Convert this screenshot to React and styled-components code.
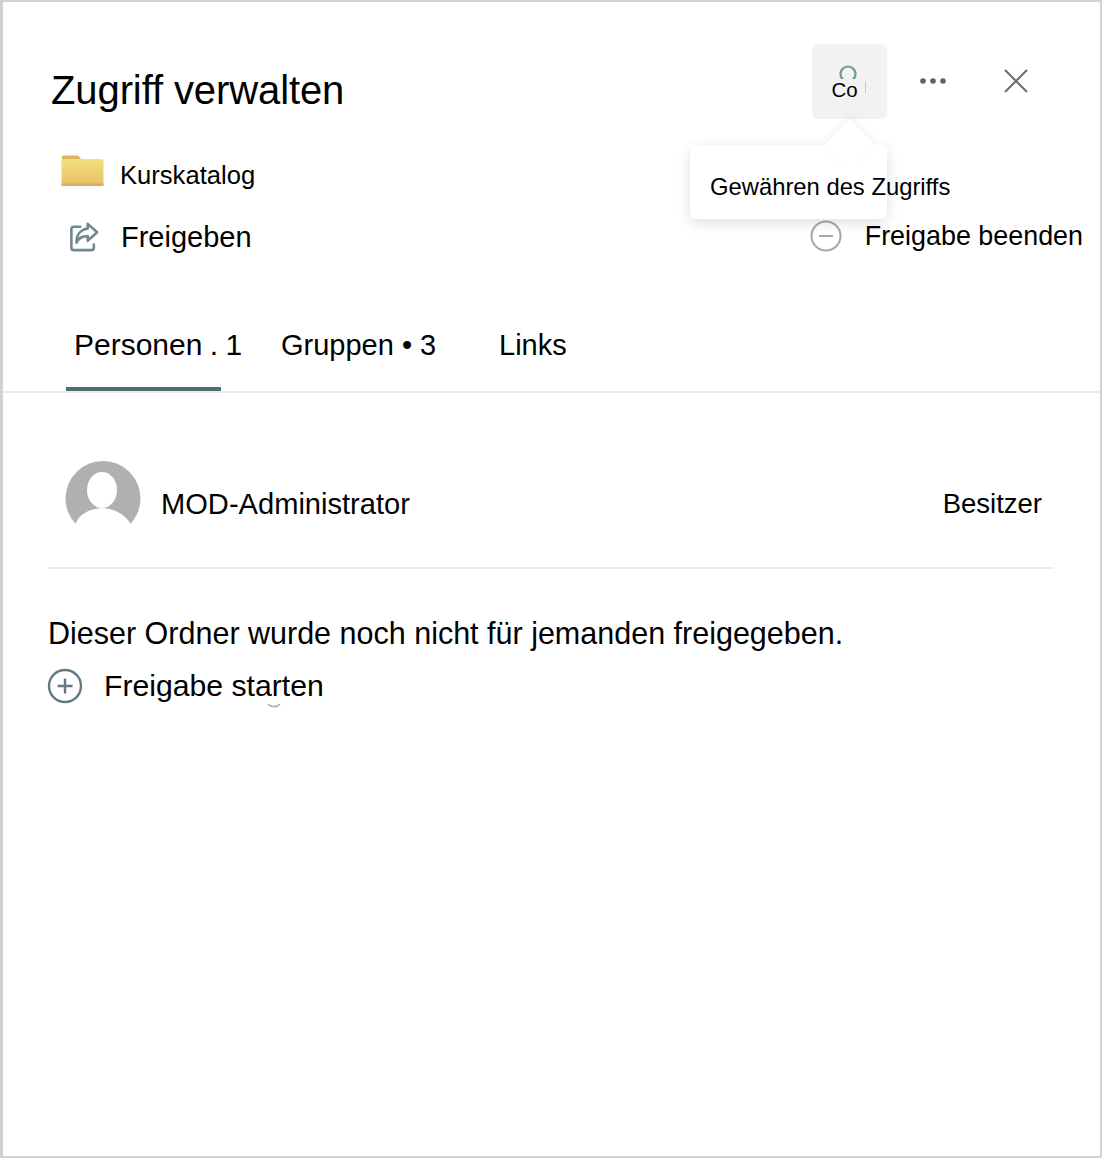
import React from 'react';
import styled, { createGlobalStyle } from 'styled-components';

const GlobalStyle = createGlobalStyle`
  html, body {
    margin: 0;
    padding: 0;
    background: #fff;
  }
  body {
    font-family: 'Liberation Sans', Arial, sans-serif;
    color: #000;
  }
`;

const Panel = styled.div`
  box-sizing: border-box;
  width: 1102px;
  height: 1158px;
  border: 2px solid #d2d2d2;
  border-left-width: 3px;
  background: #fff;
  overflow: hidden;
`;

const Header = styled.header`
  display: flex;
  justify-content: space-between;
  align-items: flex-start;
  padding: 42px 47px 0 48px;
  height: 75px;
`;

const Title = styled.h1`
  margin: 24px 0 0;
  font-size: 40px;
  line-height: 44px;
  font-weight: 400;
  letter-spacing: -0.1px;
`;

const Actions = styled.div`
  position: relative;
  display: flex;
  align-items: flex-start;
  gap: 29px;
`;

const ManageButton = styled.button`
  position: relative;
  box-sizing: border-box;
  display: flex;
  flex-direction: column;
  align-items: center;
  width: 75px;
  height: 75px;
  padding: 21px 0 0;
  border: 0;
  border-radius: 6px;
  background: #f3f2f1;
  font: inherit;
  color: #000;

  &::after {
    content: '';
    position: absolute;
    left: 53px;
    top: 37px;
    width: 1px;
    height: 12px;
    background: #b9cccd;
  }
`;

const ManageLabel = styled.span`
  margin: 1px 10px 0 0;
  font-size: 20.5px;
  line-height: 20px;
`;

const IconButton = styled.button`
  display: flex;
  align-items: center;
  justify-content: center;
  width: ${p => p.$size}px;
  height: 73px;
  padding: 0;
  border: 0;
  background: none;
`;

const Tooltip = styled.div`
  position: absolute;
  z-index: 2;
  top: 101px;
  left: -122px;
  box-sizing: border-box;
  width: 197px;
  height: 74px;
  padding: 29px 20px 0;
  background: #fff;
  border-radius: 6px;
  box-shadow: 0 4px 14px rgba(0, 0, 0, 0.13);
  font-size: 23.8px;
  line-height: 26px;
  white-space: nowrap;

  &::before {
    content: '';
    position: absolute;
    top: -18px;
    right: 19px;
    width: 36px;
    height: 36px;
    background: #fff;
    transform: rotate(45deg);
    box-shadow: -3px -3px 8px rgba(0, 0, 0, 0.05);
    z-index: -1;
  }
`;

const FolderRow = styled.div`
  display: flex;
  align-items: center;
  gap: 15px;
  margin-top: 35px;
  padding-left: 58px;
  height: 34px;
  font-size: 25.6px;
`;

const FolderName = styled.span`
  margin-top: 8px;
`;

const ShareRow = styled.div`
  display: flex;
  justify-content: space-between;
  align-items: center;
  height: 40px;
  margin-top: 29px;
  padding: 0 17px 0 66px;
`;

const ShareAction = styled.div`
  display: flex;
  align-items: center;
  gap: ${p => p.$gap}px;
  margin-bottom: ${p => p.$lift || 0}px;
  font-size: ${p => p.$font}px;
`;

const Tabs = styled.nav`
  display: flex;
  box-sizing: border-box;
  height: 97px;
  margin-top: 39px;
  padding-left: 63px;
  border-bottom: 2px solid #ecebea;
`;

const Tab = styled.div`
  position: relative;
  box-sizing: border-box;
  width: ${p => p.$width}px;
  padding: 31px 0 0 ${p => p.$inset}px;
  font-size: ${p => (p.$active ? 30 : 29)}px;
  line-height: 36px;
  white-space: nowrap;

  ${p => p.$active && `
    word-spacing: -1px;

    &::after {
      content: '';
      position: absolute;
      left: 0;
      bottom: 0;
      width: 155px;
      height: 4px;
      background: #4f6f73;
    }
  `}
`;

const PersonRow = styled.div`
  box-sizing: border-box;
  display: flex;
  align-items: flex-start;
  gap: 20px;
  height: 176px;
  margin: 0 46px 0 45px;
  padding: 68px 12px 0 17px;
  border-bottom: 2px solid #ecebea;
`;

const PersonName = styled.span`
  flex: 1;
  margin-top: 25px;
  font-size: 29.1px;
  line-height: 36px;
`;

const PersonRole = styled.span`
  margin-top: 25px;
  font-size: 27.5px;
  line-height: 36px;
`;

const EmptyText = styled.p`
  margin: 46px 0 0 45px;
  font-size: 30.5px;
  line-height: 36px;
`;

const StartShare = styled.div`
  position: relative;
  display: flex;
  align-items: center;
  gap: 21px;
  margin: 17px 0 0 44px;
  font-size: 30.2px;
  line-height: 36px;
`;

const Smudge = styled.svg`
  position: absolute;
  left: 220px;
  top: 35px;
`;

const Folder = () => (
  <svg width="44" height="32" viewBox="0 0 44 32">
    <defs>
      <linearGradient id="folderFill" x1="0" y1="0" x2="0" y2="1">
        <stop offset="0" stopColor="#f3e07e" />
        <stop offset="1" stopColor="#e6c163" />
      </linearGradient>
    </defs>
    <path d="M1 5V2a1.5 1.5 0 0 1 1.5-1.5h13.5a3 3 0 0 1 2 1L20 4z" fill="#dfb55b" />
    <rect x="0.5" y="4" width="42" height="27" rx="1.5" fill="url(#folderFill)" />
    <rect x="0.5" y="28.5" width="42" height="2.5" fill="#d9ad5e" />
  </svg>
);

const ShareIcon = () => (
  <svg width="30" height="30" viewBox="0 0 32 32" fill="none" stroke="#6f8a8d" strokeWidth="2.8" strokeLinejoin="round" strokeLinecap="round">
    <path d="M12 5H5a2.5 2.5 0 0 0-2.5 2.5v20A2.5 2.5 0 0 0 5 30h19a2.5 2.5 0 0 0 2.5-2.5V24" />
    <path d="M20 2l10 9-10 9v-5c-6 0-10 2-12 7 0-8 4-14 12-15z" />
  </svg>
);

const MinusCircle = () => (
  <svg width="32" height="32" viewBox="0 0 32 32" fill="none" stroke="#a8a8a8" strokeWidth="2">
    <circle cx="16" cy="16" r="14.5" />
    <path d="M9 16h14" />
  </svg>
);

const PlusCircle = () => (
  <svg width="36" height="36" viewBox="0 0 36 36" fill="none" stroke="#5f7c80" strokeWidth="2.4">
    <circle cx="18" cy="18" r="16" />
    <path d="M18 10.5v15M10.5 18h15" />
  </svg>
);

const PersonIcon = () => (
  <svg width="18" height="14" viewBox="0 0 18 14" fill="none" style={{ marginRight: 3, flexShrink: 0 }}>
    <circle cx="9" cy="9" r="7.5" stroke="#6f9599" strokeWidth="2.2" />
  </svg>
);

const Dots = () => (
  <svg width="26" height="6" viewBox="0 0 26 6" fill="#636363">
    <circle cx="3" cy="3" r="2.8" />
    <circle cx="13" cy="3" r="2.8" />
    <circle cx="23" cy="3" r="2.8" />
  </svg>
);

const CloseIcon = () => (
  <svg width="24" height="24" viewBox="0 0 24 24" stroke="#6e6e6e" strokeWidth="2">
    <path d="M1 1l22 22M23 1L1 23" />
  </svg>
);

const Avatar = () => (
  <svg width="76" height="68" viewBox="0 0 76 68">
    <circle cx="38" cy="37.5" r="37.5" fill="#b0b0b0" />
    <ellipse cx="37" cy="29" rx="15" ry="18" fill="#fff" />
    <path d="M11 62C14 54 24 47.5 37 47c13 .5 23 7 28 15l5 6H6z" fill="#fff" />
  </svg>
);

export default function App() {
  return (
    <>
      <GlobalStyle />
      <Panel>
        <Header>
          <Title>Zugriff verwalten</Title>
          <Actions>
            <ManageButton>
              <PersonIcon />
              <ManageLabel>Co</ManageLabel>
            </ManageButton>
            <IconButton $size={34}><Dots /></IconButton>
            <IconButton $size={74}><CloseIcon /></IconButton>
            <Tooltip>Gewähren des Zugriffs</Tooltip>
          </Actions>
        </Header>
        <FolderRow>
          <Folder />
          <FolderName>Kurskatalog</FolderName>
        </FolderRow>
        <ShareRow>
          <ShareAction $gap={22} $font={29}>
            <ShareIcon />
            <span>Freigeben</span>
          </ShareAction>
          <ShareAction $gap={23} $font={26.9} $lift={2}>
            <MinusCircle />
            <span>Freigabe beenden</span>
          </ShareAction>
        </ShareRow>
        <Tabs>
          <Tab $active $width={215} $inset={8}>Personen . 1</Tab>
          <Tab $width={218} $inset={0}>Gruppen • 3</Tab>
          <Tab $width={100} $inset={0}>Links</Tab>
        </Tabs>
        <PersonRow>
          <Avatar />
          <PersonName>MOD-Administrator</PersonName>
          <PersonRole>Besitzer</PersonRole>
        </PersonRow>
        <EmptyText>Dieser Ordner wurde noch nicht für jemanden freigegeben.</EmptyText>
        <StartShare>
          <PlusCircle />
          <span>Freigabe starten</span>
          <Smudge width="14" height="6" viewBox="0 0 14 6" fill="none">
            <path d="M1 1c3 3.5 9 3.5 12 0" stroke="#9fb3b5" strokeWidth="1.6" />
          </Smudge>
        </StartShare>
      </Panel>
    </>
  );
}
